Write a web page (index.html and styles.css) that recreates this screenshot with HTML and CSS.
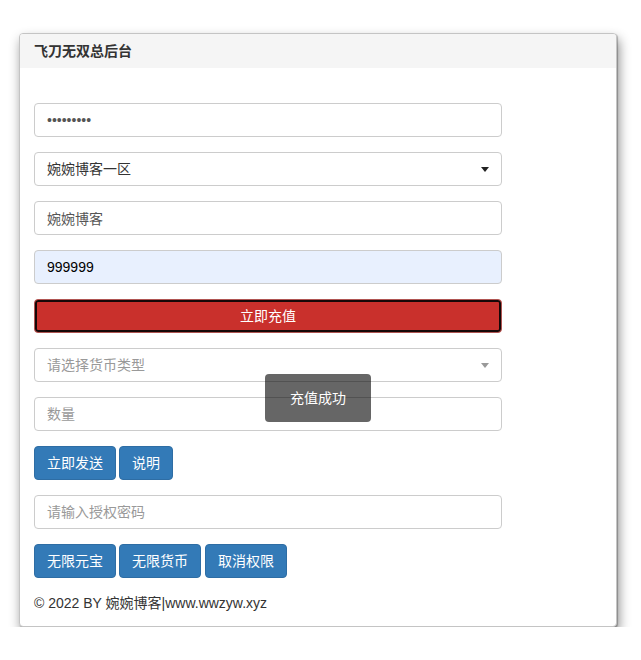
FILE: index.html
```html
<!DOCTYPE html>
<html lang="zh-CN">
<head>
<meta charset="utf-8">
<title>飞刀无双总后台</title>
<link rel="stylesheet" href="styles.css">
</head>
<body>
<div class="page">
  <div class="panel">
    <div class="panel-heading">飞刀无双总后台</div>
    <div class="panel-body">
      <form class="form">
        <input class="field" type="password" value="123456789">
        <div class="select-wrap">
          <div class="field select">婉婉博客一区</div>
        </div>
        <input class="field" type="text" value="婉婉博客">
        <input class="field autofill" type="text" value="999999">
        <button type="button" class="btn btn-danger btn-block">立即充值</button>
        <div class="select-wrap muted">
          <div class="field select placeholder">请选择货币类型</div>
        </div>
        <input class="field" type="text" placeholder="数量">
        <div class="btn-row">
          <button type="button" class="btn btn-primary">立即发送</button>
          <button type="button" class="btn btn-primary">说明</button>
        </div>
        <input class="field" type="text" placeholder="请输入授权密码">
        <div class="btn-row">
          <button type="button" class="btn btn-primary">无限元宝</button>
          <button type="button" class="btn btn-primary">无限货币</button>
          <button type="button" class="btn btn-primary">取消权限</button>
        </div>
      </form>
      <p class="footer">© 2022 BY 婉婉博客|www.wwzyw.xyz</p>
    </div>
    <div class="toast">充值成功</div>
  </div>
</div>
</body>
</html>
```
FILE: styles.css
```css
* { box-sizing: border-box; }
html, body {
  margin: 0;
  background: #fff;
}
body {
  font-family: "Liberation Sans", Arial, "Noto Sans CJK SC", sans-serif;
  font-size: 14px;
  line-height: 20px;
  color: #333;
}
.page {
  padding: 33px 0 0 19px;
}
.panel {
  position: relative;
  width: 598px;
  background: #fff;
  border: 1px solid #c4c4c4;
  border-radius: 4px;
  box-shadow: 1px 1px 1px rgba(0, 0, 0, 0.25), 2px 6px 12px rgba(0, 0, 0, 0.45);
}
.panel-heading {
  background: #f5f5f5;
  padding: 7px 14px;
  font-weight: bold;
  line-height: 20px;
  border-radius: 3px 3px 0 0;
}
.panel-body {
  padding: 35px 14px 13px;
}
.form {
  display: flex;
  flex-direction: column;
  gap: 15px;
  width: 468px;
}
.field {
  display: block;
  width: 468px;
  height: 34px;
  padding: 6px 12px;
  font: inherit;
  font-size: 14px;
  line-height: 20px;
  color: #555;
  background: #fff;
  border: 1px solid #ccc;
  border-radius: 4px;
  outline: none;
}
.field::placeholder { color: #999; }
.field.autofill {
  background: #e8f0fe;
  color: #000;
}
.select-wrap { position: relative; }
.select-wrap::after {
  content: "";
  position: absolute;
  right: 13px;
  top: 15px;
  border-style: solid;
  border-width: 5px 4px 0 4px;
  border-color: #222 transparent transparent transparent;
}
.select-wrap.muted::after {
  border-color: #999 transparent transparent transparent;
}
.select { color: #333; }
.select.placeholder { color: #999; }
.btn {
  display: inline-block;
  height: 34px;
  padding: 6px 12px;
  font: inherit;
  font-size: 14px;
  line-height: 20px;
  color: #fff;
  border: 1px solid transparent;
  border-radius: 4px;
  cursor: pointer;
}
.btn-primary {
  background: #337ab7;
  border-color: #2e6da4;
}
.btn-danger {
  background: #c9302c;
  border-color: #b05552;
  box-shadow: inset 0 0 0 2px #160808;
}
.btn-block { width: 468px; }
.btn-row {
  display: flex;
  gap: 3px;
}
.btn-row .btn + .btn + .btn { margin-left: 1px; }
.footer {
  margin: 15px 0 0;
  color: #333;
}
.toast {
  position: absolute;
  left: 245px;
  top: 340px;
  width: 106px;
  height: 48px;
  line-height: 48px;
  text-align: center;
  color: #fff;
  background: rgba(0, 0, 0, 0.6);
  border-radius: 4px;
}
```
